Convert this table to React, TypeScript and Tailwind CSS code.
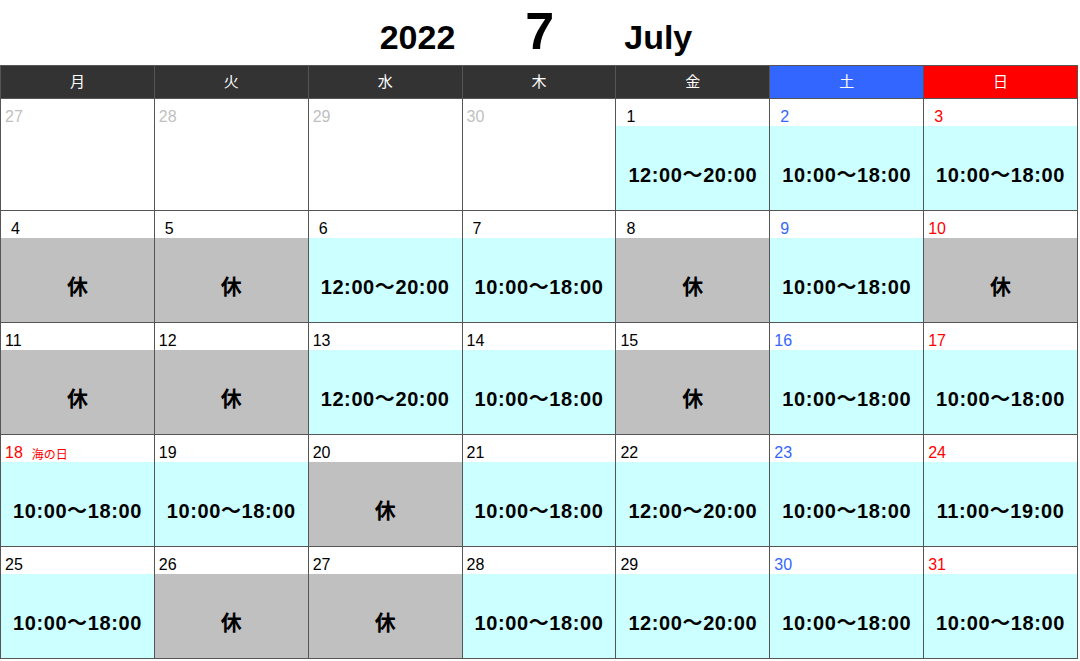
import React from 'react';

type Kind = 'prev' | 'open' | 'off';

interface Day {
  d: number;
  kind: Kind;
  time?: string;
  note?: string;
}

const WEEKDAYS = ['月', '火', '水', '木', '金', '土', '日'];

const T1 = '10:00〜18:00';
const T2 = '12:00〜20:00';
const T3 = '11:00〜19:00';

const open = (d: number, time: string, note?: string): Day => ({ d, kind: 'open', time, note });
const off = (d: number): Day => ({ d, kind: 'off' });
const prev = (d: number): Day => ({ d, kind: 'prev' });

const WEEKS: Day[][] = [
  [prev(27), prev(28), prev(29), prev(30), open(1, T2), open(2, T1), open(3, T1)],
  [off(4), off(5), open(6, T2), open(7, T1), off(8), open(9, T1), off(10)],
  [off(11), off(12), open(13, T2), open(14, T1), off(15), open(16, T1), open(17, T1)],
  [open(18, T1, '海の日'), open(19, T1), off(20), open(21, T1), open(22, T2), open(23, T1), open(24, T3)],
  [open(25, T1), off(26), off(27), open(28, T1), open(29, T2), open(30, T1), open(31, T1)],
];

const jp = { fontFamily: '"Liberation Sans", "Noto Sans CJK JP", sans-serif' };

const headerBg = ['bg-[#333333]', 'bg-[#333333]', 'bg-[#333333]', 'bg-[#333333]', 'bg-[#333333]', 'bg-[#3366ff]', 'bg-[#ff0000]'];

const dateColor = (day: Day, col: number) => {
  if (day.kind === 'prev') return 'text-[#bfbfbf]';
  if (day.note) return 'text-[#ff0000]';
  if (col === 5) return 'text-[#3366ff]';
  if (col === 6) return 'text-[#ff0000]';
  return 'text-black';
};

const Cell: React.FC<{ day: Day; col: number }> = ({ day, col }) => (
  <div className="flex flex-col h-[111px] bg-white">
    <div
      className={`h-[27px] flex items-end pb-[1px] text-[16px] leading-none ${day.d < 10 ? 'pl-[10px]' : 'pl-[4px]'} ${dateColor(day, col)}`}
    >
      <span>{day.d}</span>
      {day.note && <span className="ml-[9px] text-[12px] text-[#ff0000]">{day.note}</span>}
    </div>
    {day.kind === 'prev' ? (
      <div className="flex-1 bg-white" />
    ) : (
      <div
        className={`flex-1 flex items-center justify-center pt-[14px] font-bold text-black ${
          day.kind === 'off' ? 'bg-[#c0c0c0] text-[21px]' : 'bg-[#ccffff] text-[20px] tracking-[0.6px]'
        }`}
      >
        {day.kind === 'off' ? '休' : day.time}
      </div>
    )}
  </div>
);

export default function App() {
  return (
    <div className="w-[1080px] h-[661px] bg-white overflow-hidden" style={jp}>
      <div className="h-[65px] flex items-end justify-center pb-[5px] font-bold text-black pr-[8px]">
        <div className="flex items-baseline">
          <span className="text-[34px] leading-none">2022</span>
          <span className="text-[52px] leading-[1.1] ml-[70px]">7</span>
          <span className="text-[34px] leading-none ml-[70px]">July</span>
        </div>
      </div>
      <div className="w-[1078px] grid grid-cols-7 gap-px bg-[#555555] border border-[#555555]">
        {WEEKDAYS.map((w, i) => (
          <div
            key={w}
            className={`h-[32px] flex items-center justify-center text-white text-[15px] ${headerBg[i]}`}
          >
            {w}
          </div>
        ))}
        {WEEKS.flatMap((week, r) =>
          week.map((day, c) => <Cell key={`${r}-${c}`} day={day} col={c} />)
        )}
      </div>
    </div>
  );
}
